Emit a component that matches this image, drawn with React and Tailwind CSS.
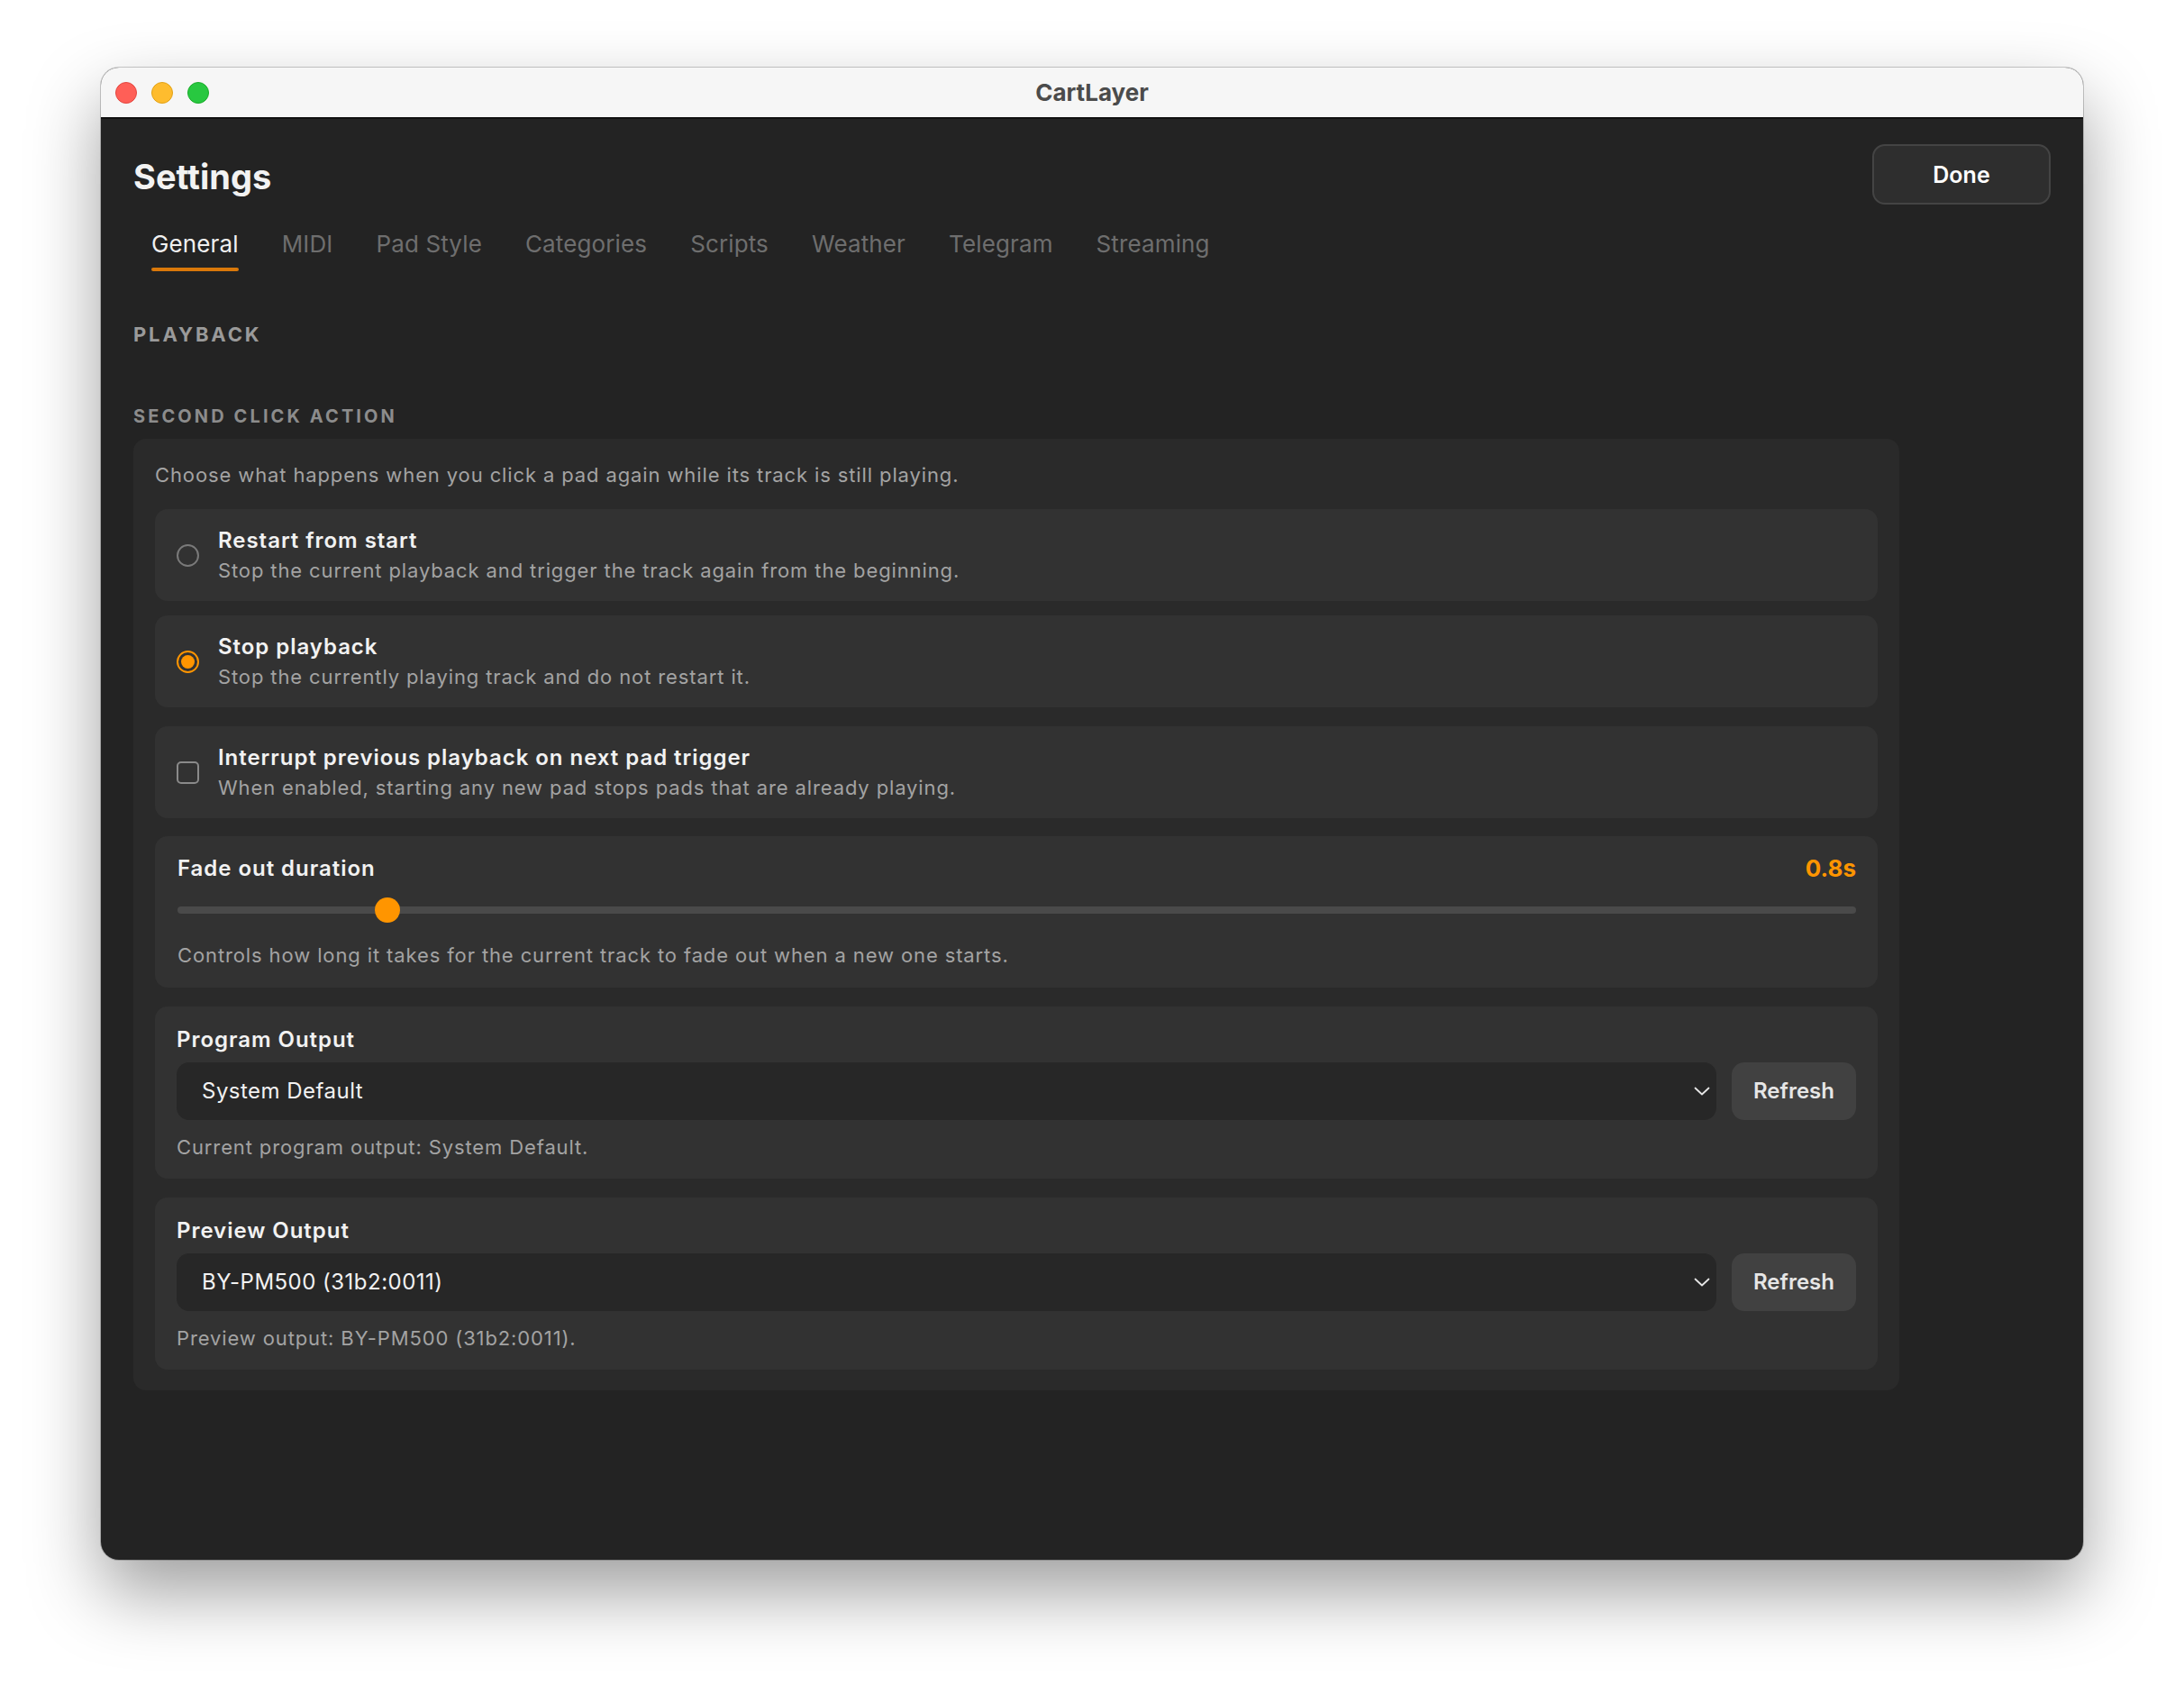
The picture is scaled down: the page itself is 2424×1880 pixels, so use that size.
import React from "react";

const tabs = ["General", "MIDI", "Pad Style", "Categories", "Scripts", "Weather", "Telegram", "Streaming"];

function OptionCard({ control, title, sub, className = "" }) {
  return (
    <div className={"flex items-center gap-[21px] rounded-[14px] bg-[#323232] pl-[24px] py-[20px] " + className}>
      {control}
      <div className="flex flex-col">
        <div className="text-[24px] leading-[30px] font-semibold tracking-[0.04em] text-[#f2f2f2]">{title}</div>
        <div className="mt-[4px] text-[22px] leading-[28px] tracking-[0.04em] text-[#a3a3a3]">{sub}</div>
      </div>
    </div>
  );
}

function Chevron() {
  return (
    <svg width="18" height="10" viewBox="0 0 18 10" fill="none">
      <path d="M1.5 1.5 L9 8.5 L16.5 1.5" stroke="#e6e6e6" strokeWidth="1.8" strokeLinecap="round" strokeLinejoin="round" />
    </svg>
  );
}

function OutputCard({ title, value, desc, className = "" }) {
  return (
    <div className={"rounded-[14px] bg-[#323232] pl-[24px] pr-[24px] pt-[22px] pb-[21px] " + className}>
      <div className="text-[24px] leading-[30px] font-semibold tracking-[0.04em] text-[#f2f2f2]">{title}</div>
      <div className="mt-[10px] flex gap-[17px]">
        <div className="flex-1 h-[64px] rounded-[14px] bg-[#272727] flex items-center justify-between pl-[28px] pr-[7px]">
          <span className="text-[24px] tracking-[0.02em] text-[#f2f2f2]">{value}</span>
          <Chevron />
        </div>
        <button className="w-[138px] h-[64px] rounded-[14px] bg-[#414141] text-[24px] font-semibold text-[#e6e6e6]">Refresh</button>
      </div>
      <div className="mt-[16px] text-[22px] leading-[28px] tracking-[0.04em] text-[#a3a3a3]">{desc}</div>
    </div>
  );
}

export default function App() {
  return (
    <div className="w-[2424px] h-[1880px] bg-white pl-[112px] pt-[75px] font-[family-name:Inter,sans-serif]">
      <div className="w-[2200px] h-[1656px] rounded-[20px] overflow-hidden flex flex-col bg-[#232323] shadow-[0_36px_80px_rgba(0,0,0,0.38),0_0_0_1px_rgba(0,0,0,0.2)]">
        {/* Title bar */}
        <div className="h-[57px] shrink-0 bg-[#f6f6f6] border-b-2 border-[#111111] grid grid-cols-[1fr_auto_1fr] items-center">
          <div className="flex items-center gap-[16px] pl-[16px]">
            <div className="w-[24px] h-[24px] rounded-full bg-[#ff5f57] border border-[#e2463f]" />
            <div className="w-[24px] h-[24px] rounded-full bg-[#febc2e] border border-[#e1a116]" />
            <div className="w-[24px] h-[24px] rounded-full bg-[#28c840] border border-[#1aab29]" />
          </div>
          <div className="text-[26px] font-bold text-[#4b4b4b]">CartLayer</div>
          <div />
        </div>

        {/* Content */}
        <div className="flex-1 px-[36px] pt-[28px]">
          <div className="flex justify-between items-start">
            <h1 className="mt-[13px] text-[38px] leading-[46px] font-bold text-[#f2f2f2]">Settings</h1>
            <button className="w-[198px] h-[67px] pt-[3px] rounded-[14px] bg-[#2e2e2e] border-2 border-[#444444] text-[25px] font-semibold text-white">Done</button>
          </div>

          <div className="mt-[28px] flex gap-[48px] pl-[20px]">
            {tabs.map((t, i) => (
              <div key={t} className="flex flex-col">
                <span className={"text-[26px] leading-[32px] tracking-[0.005em] " + (i === 0 ? "text-[#f0f0f0]" : "text-[#6e6e6e]")}>{t}</span>
                <div className={"mt-[10px] h-[4px] rounded-full " + (i === 0 ? "bg-[#d9780a]" : "bg-transparent")} />
              </div>
            ))}
          </div>

          <div className="mt-[56px] text-[22px] leading-[28px] font-bold tracking-[0.13em] text-[#9a9a9a]">PLAYBACK</div>
          <div className="mt-[65px] text-[20px] leading-[24px] font-bold tracking-[0.155em] text-[#8c8c8c]">SECOND CLICK ACTION</div>

          <div className="mt-[13px] w-[1960px] rounded-[14px] bg-[#2a2a2a] px-[24px] pt-[26px] pb-[23px] flex flex-col">
            <div className="text-[22px] leading-[28px] tracking-[0.04em] text-[#a3a3a3]">
              Choose what happens when you click a pad again while its track is still playing.
            </div>

            <OptionCard
              className="mt-[24px]"
              control={<div className="w-[25px] h-[25px] rounded-full border-2 border-[#7a7a7a]" />}
              title="Restart from start"
              sub="Stop the current playback and trigger the track again from the beginning."
            />
            <OptionCard
              className="mt-[16px]"
              control={
                <div className="w-[25px] h-[25px] rounded-full border-2 border-[#ff9500] flex items-center justify-center">
                  <div className="w-[15px] h-[15px] rounded-full bg-[#ff9500]" />
                </div>
              }
              title="Stop playback"
              sub="Stop the currently playing track and do not restart it."
            />
            <OptionCard
              className="mt-[21px]"
              control={<div className="w-[25px] h-[25px] rounded-[5px] border-2 border-[#8a8a8a]" />}
              title="Interrupt previous playback on next pad trigger"
              sub="When enabled, starting any new pad stops pads that are already playing."
            />

            {/* Fade */}
            <div className="mt-[20px] rounded-[14px] bg-[#323232] pl-[25px] pr-[24px] pt-[21px] pb-[22px]">
              <div className="flex justify-between items-center">
                <div className="text-[24px] leading-[30px] font-semibold tracking-[0.04em] text-[#f2f2f2]">Fade out duration</div>
                <div className="text-[26px] leading-[30px] font-bold text-[#ff9500]">0.8s</div>
              </div>
              <div className="mt-[17px] h-[28px] flex items-center">
                <div className="relative w-full h-[8px] rounded-full bg-[#4a4a4a]">
                  <div className="absolute top-[-10px] left-[219px] w-[28px] h-[28px] rounded-full bg-[#ff9500]" />
                </div>
              </div>
              <div className="mt-[22px] text-[22px] leading-[28px] tracking-[0.04em] text-[#a3a3a3]">
                Controls how long it takes for the current track to fade out when a new one starts.
              </div>
            </div>

            <OutputCard
              className="mt-[21px]"
              title="Program Output"
              value="System Default"
              desc="Current program output: System Default."
            />
            <OutputCard
              className="mt-[21px]"
              title="Preview Output"
              value="BY-PM500 (31b2:0011)"
              desc="Preview output: BY-PM500 (31b2:0011)."
            />
          </div>
        </div>
      </div>
    </div>
  );
}
